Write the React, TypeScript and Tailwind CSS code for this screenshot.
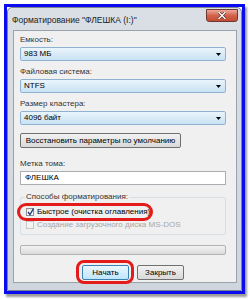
import React from "react";

function Combo({ value }: { value: string }) {
  return (
    <div className="relative flex h-[14px] w-[206px] items-center rounded-[2px] border border-[#8fb2d0] bg-gradient-to-b from-[#eaf5fc] to-[#c9e2f3] pl-[3px] text-[8px] text-black">
      <span>{value}</span>
      <svg className="absolute right-[4px] top-[5px]" width="5" height="3" viewBox="0 0 5 3">
        <path d="M0 0 H5 L2.5 3 Z" fill="#000" />
      </svg>
    </div>
  );
}

function Label({ text }: { text: string }) {
  return <div className="mb-[1px] h-[12px] text-[8px] leading-[12px] text-[#333]">{text}</div>;
}

export default function App() {
  return (
    <div
      className="h-[300px] w-[250px] bg-white pl-[4px] pt-[4px]"
      style={{ fontFamily: '"Liberation Sans", Arial, sans-serif' }}
    >
      <div className="h-[290px] w-[241px] border-[3px] border-[#0b0bf0] shadow-[2px_3px_2px_#9a9a9a]">
        <div className="relative flex h-full w-full flex-col rounded-t-[5px] border border-[#7d858d] bg-gradient-to-b from-[#d9dfe5] to-[#cfd5dc]">
          {/* Title bar */}
          <div className="relative h-[22px] shrink-0">
            <div className="absolute left-[4px] top-[6px] text-[8.5px] leading-[12px] text-[#222]">
              Форматирование "ФЛЕШКА (I:)"
            </div>
            <div className="absolute right-[3px] top-[1px] flex h-[13px] w-[32px] items-center justify-center rounded-b-[3px] border border-[#6e3a30] bg-gradient-to-b from-[#e9a99c] via-[#d3624d] to-[#c24a33]">
              <svg width="8" height="7" viewBox="0 0 8 7">
                <path d="M1 0.5 L7 6.5 M7 0.5 L1 6.5" stroke="#4a2a24" strokeWidth="2.6" strokeLinecap="square" />
                <path d="M1 0.5 L7 6.5 M7 0.5 L1 6.5" stroke="#ffffff" strokeWidth="1.4" strokeLinecap="square" />
              </svg>
            </div>
          </div>
          {/* Client area */}
          <div className="relative mb-[7px] ml-[5px] mr-[4px] flex flex-1 flex-col border border-[#9aa3ab] bg-[#f0f0f0] pl-[6px] pt-[3px]">
            <Label text="Емкость:" />
            <Combo value="983 МБ" />
            <div className="mt-[5px]">
              <Label text="Файловая система:" />
              <Combo value="NTFS" />
            </div>
            <div className="mt-[5px]">
              <Label text="Размер кластера:" />
              <Combo value="4096 байт" />
            </div>
            <div className="mt-[8px] flex h-[15px] w-[161px] items-center justify-center rounded-[2px] border border-[#707070] bg-gradient-to-b from-[#f2f2f2] to-[#d9d9d9] text-[8px] text-black">
              Восстановить параметры по умолчанию
            </div>
            <div className="mt-[10px]">
              <Label text="Метка тома:" />
              <div className="flex h-[14px] w-[206px] items-center border border-[#abadb3] bg-white pl-[4px] text-[8px] text-black">
                ФЛЕШКА
              </div>
            </div>
            {/* Group box */}
            <div className="relative mt-[12px] h-[38px] w-[206px] rounded-[2px] border border-[#d5dfe5]">
              <div className="absolute left-[4px] top-[-7px] bg-[#f0f0f0] px-[1px] text-[8px] leading-[12px] text-[#333]">
                Способы форматирования:
              </div>
              <div className="ml-[5px] mt-[8px] flex h-[12px] items-center gap-[3px] text-[8px] text-black">
                <div className="relative h-[8px] w-[8px] border border-[#8e8f8f] bg-gradient-to-b from-[#e8eaec] to-[#ffffff]">
                  <svg className="absolute left-[0px] top-[-1px]" width="7" height="8" viewBox="0 0 7 8">
                    <path d="M1 4 L3 6.5 L6.5 0.5" fill="none" stroke="#1e3a78" strokeWidth="1.3" />
                  </svg>
                </div>
                <span>Быстрое (очистка оглавления)</span>
              </div>
              <div className="ml-[5px] mt-[1px] flex h-[12px] items-center gap-[3px] text-[8px] text-[#a7a7a7]">
                <div className="h-[8px] w-[8px] border border-[#c8c8c8] bg-[#f4f4f4]" />
                <span>Создание загрузочного диска MS-DOS</span>
              </div>
            </div>
            {/* Progress bar */}
            <div className="mt-[10px] h-[10px] w-[206px] rounded-[2px] border border-[#b2b2b2] bg-gradient-to-b from-[#f3f3f3] to-[#dcdcdc]" />
            {/* Buttons */}
            <div className="mt-[10px] flex gap-[8px] pl-[62px]">
              <div className="flex h-[15px] w-[47px] items-center justify-center rounded-[2px] border border-[#3c7fb1] bg-gradient-to-b from-[#eaf6fd] to-[#bee6fd] text-[8px] text-black">
                Начать
              </div>
              <div className="flex h-[15px] w-[47px] items-center justify-center rounded-[2px] border border-[#707070] bg-gradient-to-b from-[#f2f2f2] to-[#d9d9d9] text-[8px] text-black">
                Закрыть
              </div>
            </div>
            {/* Red highlights */}
            <div className="pointer-events-none absolute left-[3px] top-[172px] h-[18px] w-[136px] rounded-full border-[3px] border-[#e31b1b]" />
            <div className="pointer-events-none absolute left-[62px] top-[229px] h-[24px] w-[58px] rounded-[8px] border-[3px] border-[#e31b1b]" />
          </div>
        </div>
      </div>
    </div>
  );
}
